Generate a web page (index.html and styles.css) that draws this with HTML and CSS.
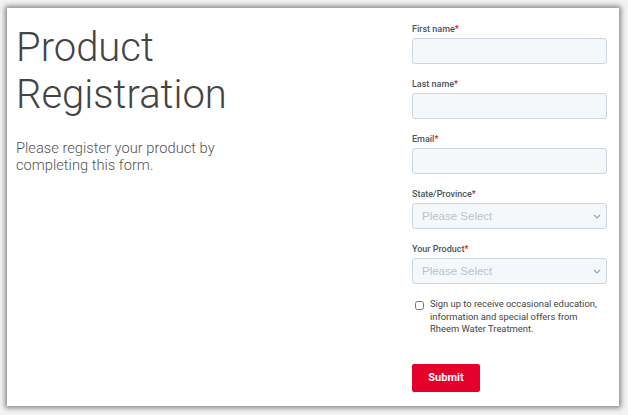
FILE: index.html
```html
<!DOCTYPE html>
<html lang="en">
<head>
    <meta charset="UTF-8">
    <meta name="viewport" content="width=device-width, initial-scale=1.0">
    <title>Product Registration</title>
    <link rel="stylesheet" href="styles.css">
</head>
<body>
    <div class="panel">
        <div class="intro">
            <h1>Product Registration</h1>
            <p>Please register your product by completing this form.</p>
        </div>

        <form class="reg-form">
            <div class="field">
                <label for="firstname">First name<span class="req">*</span></label>
                <input type="text" id="firstname">
            </div>
            <div class="field">
                <label for="lastname">Last name<span class="req">*</span></label>
                <input type="text" id="lastname">
            </div>
            <div class="field">
                <label for="email">Email<span class="req">*</span></label>
                <input type="email" id="email">
            </div>
            <div class="field">
                <label for="state">State/Province<span class="req">*</span></label>
                <div class="select-wrap">
                    <select id="state">
                        <option>Please Select</option>
                    </select>
                    <svg class="chev" width="8" height="5" viewBox="0 0 8 5"><path d="M1 1l3 3 3-3" fill="none" stroke="#9aa3ad" stroke-width="1.2"/></svg>
                </div>
            </div>
            <div class="field">
                <label for="product">Your Product<span class="req">*</span></label>
                <div class="select-wrap">
                    <select id="product">
                        <option>Please Select</option>
                    </select>
                    <svg class="chev" width="8" height="5" viewBox="0 0 8 5"><path d="M1 1l3 3 3-3" fill="none" stroke="#9aa3ad" stroke-width="1.2"/></svg>
                </div>
            </div>
            <label class="optin">
                <input type="checkbox">
                <span>Sign up to receive occasional education, information and special offers from Rheem Water Treatment.</span>
            </label>
            <button type="button">Submit</button>
        </form>
    </div>
</body>
</html>
```

FILE: styles.css
```css
html, body { margin: 0; height: 100%; }
body { background-color: #f3f3f3; font-family: Roboto, "Liberation Sans", sans-serif; color: #333; padding: 8px 9px 9px 7px; box-sizing: border-box; }

.panel {
    background-color: #fff;
    height: 398px;
    width: 612px;
    box-shadow: 0 0 5px 2px rgba(0,0,0,0.45);
    display: flex;
    justify-content: space-between;
    box-sizing: border-box;
    padding: 0 12px 0 9px;
}

.intro { padding-top: 16px; }
.intro h1 {
    font-weight: 300;
    font-size: 40px;
    line-height: 47px;
    margin: 0;
    color: #444;
    width: 230px;
}
.intro p {
    font-weight: 300;
    font-size: 14.7px;
    line-height: 17px;
    color: #555;
    margin: 22px 0 0;
    width: 215px;
}

.reg-form { width: 195px; padding-top: 15px; }
.field { margin-bottom: 14px; }
.field label {
    display: block;
    font-size: 9px;
    font-weight: 500;
    color: #4a5560;
    line-height: 12px;
    margin-bottom: 3px;
}
.req { color: #e4002b; }

.field input, .field select {
    display: block;
    width: 100%;
    height: 26px;
    box-sizing: border-box;
    border: 1px solid #cbd6e2;
    border-radius: 3px;
    background-color: #f5f8fa;
    margin: 0;
}
.select-wrap { position: relative; }
.field select {
    appearance: none;
    -webkit-appearance: none;
    padding: 0 9px;
    font-family: "Liberation Sans", Arial, sans-serif;
    font-size: 11.5px;
    color: #bcc2c8;
}
.chev { position: absolute; right: 6px; top: 11px; }

.optin {
    display: flex;
    gap: 6px;
    font-size: 9.4px;
    line-height: 12.5px;
    color: #444;
    margin: 1px 0 0 3px;
}
.optin input { margin: 3px 0 0; width: 9px; height: 9px; flex: none; }

button {
    margin-top: 28px;
    background-color: #e4002b;
    color: #fff;
    border: none;
    border-radius: 2px;
    width: 68px;
    height: 28px;
    font-family: inherit;
    font-weight: 700;
    font-size: 11px;
    cursor: pointer;
}
```
